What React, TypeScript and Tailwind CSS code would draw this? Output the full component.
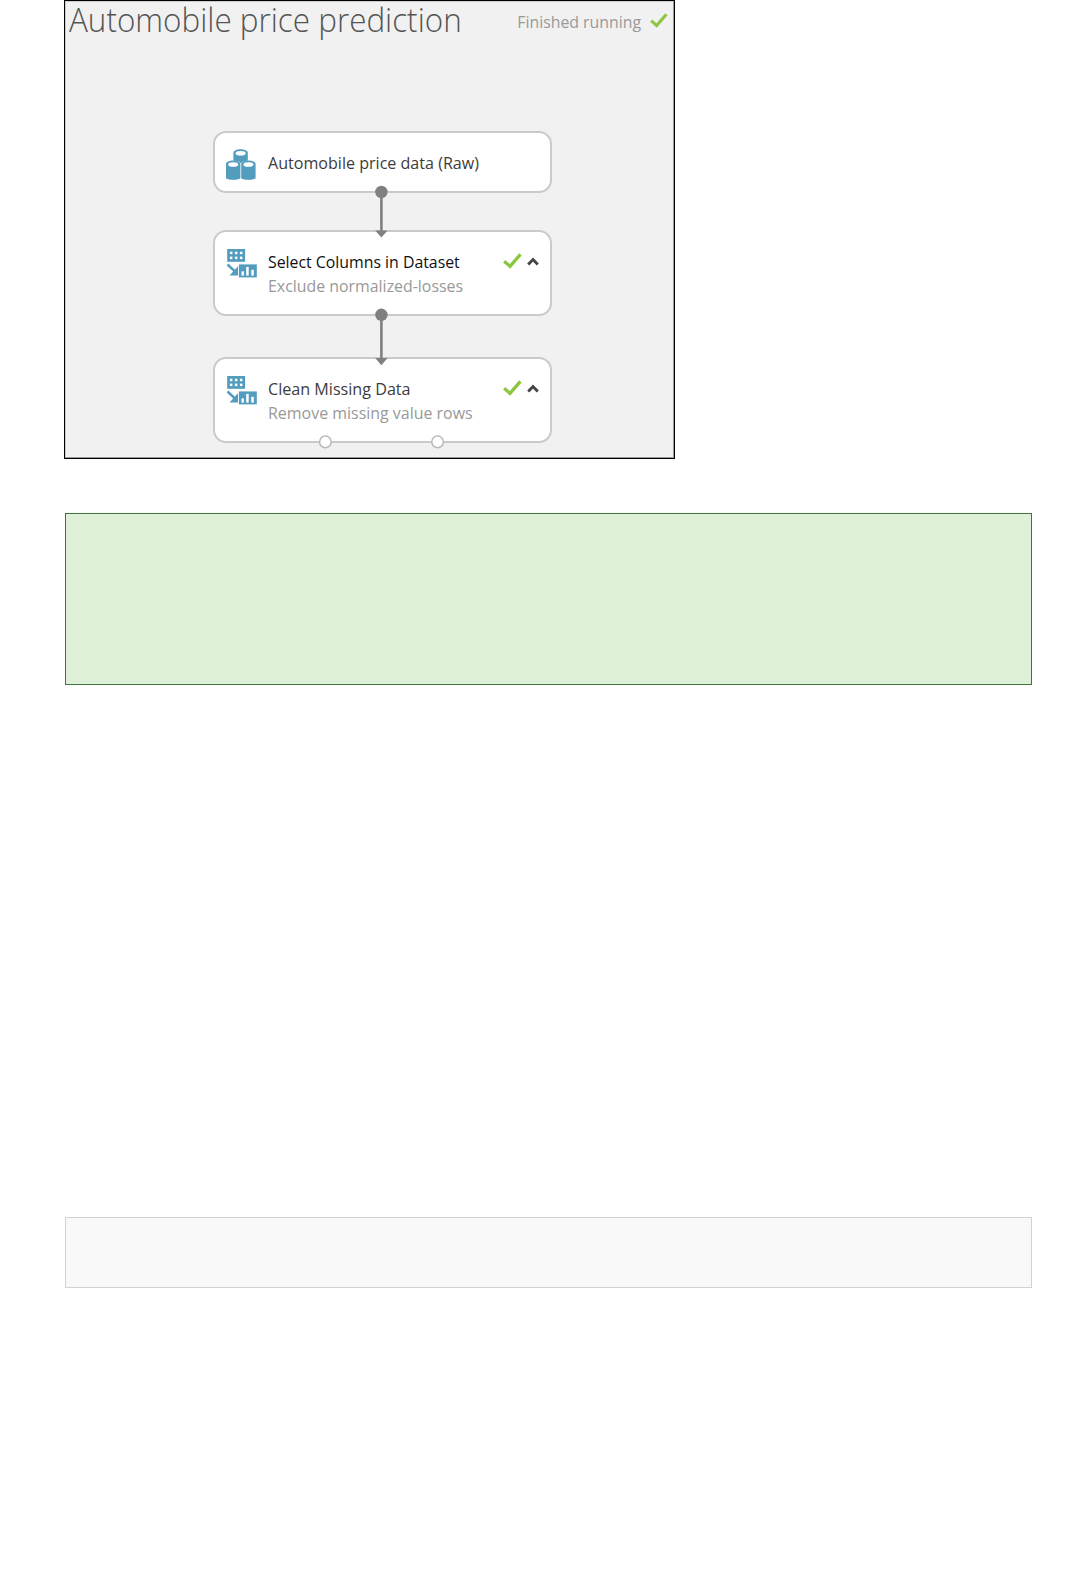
import type { ReactNode } from "react";

function Check({ className }: { className: string }) {
  return (
    <svg viewBox="0 0 19 16" className={className} fill="none">
      <path d="M1.2 8.2 L7 13.4 L17.4 1.4" stroke="#8cc63f" strokeWidth="3.3" />
    </svg>
  );
}

function Cylinder({ x, y, h }: { x: number; y: number; h: number }) {
  return (
    <g transform={`translate(${x} ${y})`}>
      <path
        d={`M0 3.6 C0 -1.1 14.4 -1.1 14.4 3.6 V${h - 2.2} C14.4 ${h + 0.6} 0 ${h + 0.6} 0 ${h - 2.2} Z`}
        fill="#529cbe"
      />
      <ellipse cx="7.2" cy="4" rx="5" ry="2.3" fill="#fff" />
    </g>
  );
}

function DatasetIcon() {
  return (
    <svg viewBox="0 0 30 32" className="-mt-px h-8 w-[30px] shrink-0">
      <Cylinder x={7.4} y={0.2} h={14} />
      <path d="M0 16 C0 10.4 14.8 10.4 14.8 15 C15 10.4 30 10.4 30 16" fill="#fff" />
      <Cylinder x={0} y={11.5} h={19.4} />
      <Cylinder x={15.2} y={11.5} h={19.4} />
    </svg>
  );
}

function TransformIcon() {
  return (
    <svg viewBox="0.4 -0.4 31 30" className="mt-[-1px] ml-px h-[30px] w-[31px] shrink-0">
      <rect x="0.6" y="0.6" width="17.9" height="12.8" fill="#529cbe" />
      <g fill="#fff">
        <rect x="3.3" y="3.3" width="2.5" height="2.5" />
        <rect x="8.3" y="3.3" width="2.5" height="2.5" />
        <rect x="13.3" y="3.3" width="2.5" height="2.5" />
        <rect x="3.3" y="8.2" width="2.5" height="2.5" />
        <rect x="8.3" y="8.2" width="2.5" height="2.5" />
        <rect x="13.3" y="8.2" width="2.5" height="2.5" />
      </g>
      <path d="M0.9 16 L8.5 23.2" stroke="#529cbe" strokeWidth="2.6" />
      <path d="M11.4 17.8 V27.2 H2.9 Z" fill="#529cbe" />
      <rect x="12.3" y="16" width="17.9" height="13" fill="#529cbe" />
      <g fill="#fff">
        <rect x="14.9" y="23" width="2.4" height="4.2" />
        <rect x="19.6" y="18.5" width="2.5" height="8.7" />
        <rect x="24.7" y="21.4" width="2.5" height="5.8" />
      </g>
    </svg>
  );
}

function Status() {
  return (
    <div className="ml-auto mt-[4px] flex gap-[5px]">
      <Check className="h-4 w-[19px]" />
      <svg viewBox="0 0 12 9" className="mt-[4px] h-[9px] w-3" fill="none">
        <path d="M1.2 7.4 L6 2.5 L10.8 7.4" stroke="#444" strokeWidth="2.9" />
      </svg>
    </div>
  );
}

function Node({ className, children }: { className: string; children: ReactNode }) {
  return (
    <div
      className={`flex w-[339px] items-start rounded-[13px] border-2 border-[#cacaca] bg-white pl-[11px] pr-[11px] pt-[17px] ${className}`}
    >
      {children}
    </div>
  );
}

function Labels({ children }: { children: ReactNode }) {
  return (
    <div className="mt-px flex flex-col items-start whitespace-nowrap text-[16px] leading-6 text-[#999]">
      {children}
    </div>
  );
}

export default function App() {
  return (
    <main className="min-h-[1570px] bg-white pl-16 font-['Open_Sans',sans-serif]">
      <section className="relative flex h-[459px] w-[611px] flex-col border border-black bg-[#f1f1f1] shadow-[inset_-1px_-1px_0_#999,inset_1px_1px_0_#ccc]">
        <header className="flex h-[46px] items-start justify-between pl-[4px] pr-[6px]">
          <h1 className="w-[411px] origin-left scale-x-[0.952] whitespace-nowrap text-[33px] font-light leading-[38px] text-[#555]">
            Automobile price prediction
          </h1>
          <div className="flex items-start gap-[9px] pt-[9px]">
            <span className="origin-right scale-x-[0.99] whitespace-nowrap text-[16px] leading-6 text-[#999]">
              Finished running
            </span>
            <Check className="mt-[3px] h-[15px] w-[18px]" />
          </div>
        </header>

        <div className="flex flex-col pl-[148px] pt-[84px]">
          <Node className="h-[62px] gap-[12.2px]">
            <DatasetIcon />
            <Labels>
              <span className="origin-left scale-x-[1.005] text-[#3c3c3c]">Automobile price data (Raw)</span>
            </Labels>
          </Node>
          <Node className="mt-[37px] h-[86px] gap-[10.2px]">
            <TransformIcon />
            <Labels>
              <span className="origin-left scale-x-[0.99] text-[#111]">Select Columns in Dataset</span>
              <span className="origin-left scale-x-[0.993]">Exclude normalized-losses</span>
            </Labels>
            <Status />
          </Node>
          <Node className="mt-[41px] h-[86px] gap-[10.2px]">
            <TransformIcon />
            <Labels>
              <span className="origin-left scale-x-[1.008] text-[#3c3c3c]">Clean Missing Data</span>
              <span className="origin-left scale-x-[0.997]">Remove missing value rows</span>
            </Labels>
            <Status />
          </Node>
        </div>

        <svg viewBox="65 1 609 457" className="absolute inset-0 h-[457px] w-[609px]">
          <g fill="#808080">
            <circle cx="381.4" cy="192" r="6.2" />
            <rect x="380.1" y="192" width="2.6" height="39" />
            <path d="M375.2 230.6 H387.6 L381.4 237.6 Z" />
            <circle cx="381.4" cy="314.8" r="6.2" />
            <rect x="380.1" y="315" width="2.6" height="43" />
            <path d="M375.2 358 H387.6 L381.4 365.2 Z" />
          </g>
          <g fill="#fff" stroke="#b9b9b9" strokeWidth="1.5">
            <circle cx="325.4" cy="441.9" r="5.8" />
            <circle cx="437.6" cy="441.9" r="5.8" />
          </g>
        </svg>
      </section>
      <div className="ml-px mt-[54px] h-[172px] w-[967px] border border-[#3c763d] bg-[#dff0d8]" />
      <div className="ml-px mt-[532px] h-[71px] w-[967px] border border-[#d3d3d3] bg-[#f9f9f9]" />
    </main>
  );
}
